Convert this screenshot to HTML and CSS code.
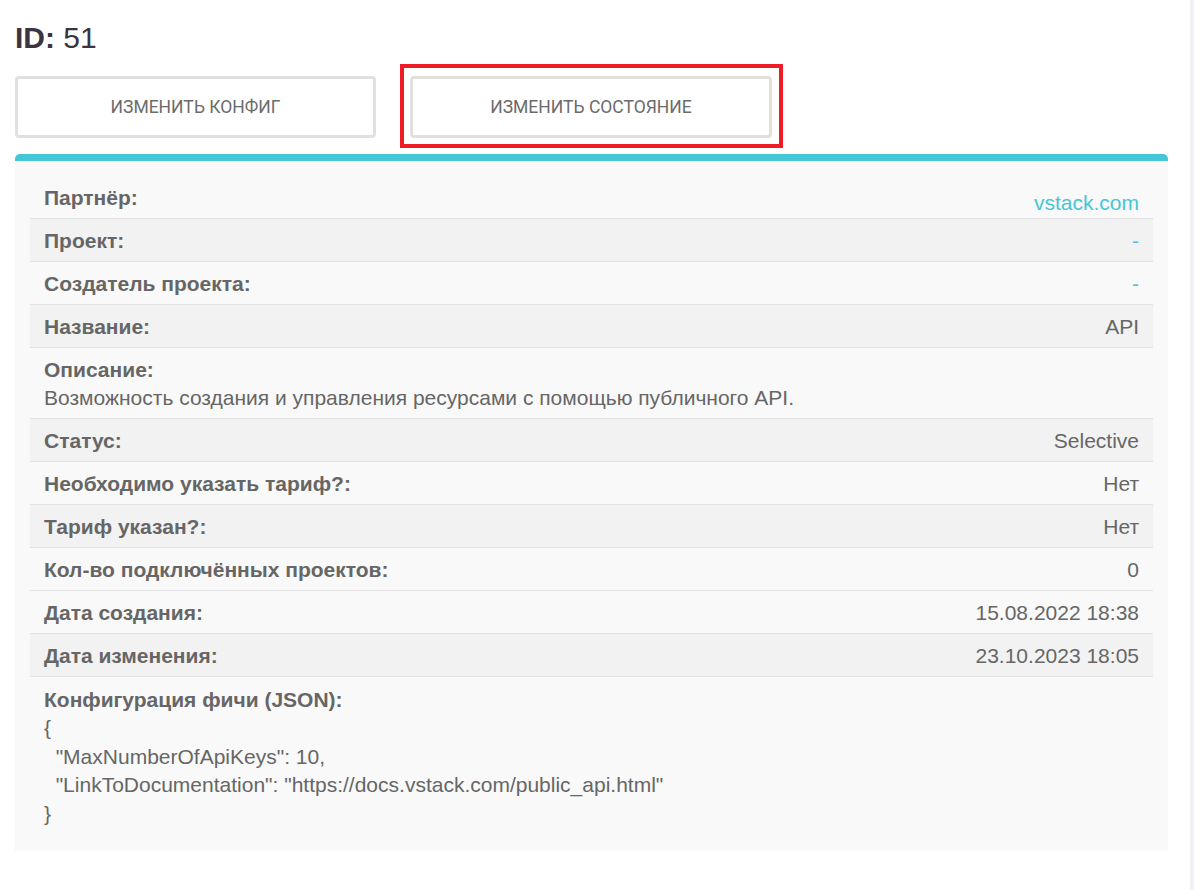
FILE: index.html
```html
<!DOCTYPE html>
<html lang="ru">
<head>
<meta charset="utf-8">
<title>ID: 51</title>
<link rel="stylesheet" href="styles.css">
</head>
<body>
<div class="page">
  <h1 class="title"><b>ID:</b> 51</h1>
  <div class="actions">
    <button class="btn">Изменить конфиг</button>
    <button class="btn btn-marked">Изменить состояние</button>
  </div>
  <div class="card">
    <div class="row first">
      <span class="label">Партнёр:</span>
      <a class="value link low">vstack.com</a>
    </div>
    <div class="row alt">
      <span class="label">Проект:</span>
      <a class="value link">-</a>
    </div>
    <div class="row">
      <span class="label">Создатель проекта:</span>
      <a class="value link">-</a>
    </div>
    <div class="row alt">
      <span class="label">Название:</span>
      <span class="value">API</span>
    </div>
    <div class="row block">
      <div class="label">Описание:</div>
      <div class="text">Возможность создания и управления ресурсами с помощью публичного API.</div>
    </div>
    <div class="row alt">
      <span class="label">Статус:</span>
      <span class="value">Selective</span>
    </div>
    <div class="row">
      <span class="label">Необходимо указать тариф?:</span>
      <span class="value">Нет</span>
    </div>
    <div class="row alt">
      <span class="label">Тариф указан?:</span>
      <span class="value">Нет</span>
    </div>
    <div class="row">
      <span class="label">Кол-во подключённых проектов:</span>
      <span class="value">0</span>
    </div>
    <div class="row">
      <span class="label">Дата создания:</span>
      <span class="value">15.08.2022 18:38</span>
    </div>
    <div class="row alt">
      <span class="label">Дата изменения:</span>
      <span class="value">23.10.2023 18:05</span>
    </div>
    <div class="row block json">
      <div class="label">Конфигурация фичи (JSON):</div>
<pre class="code">{
  "MaxNumberOfApiKeys": 10,
  "LinkToDocumentation": "https://docs.vstack.com/public_api.html"
}</pre>
    </div>
  </div>
</div>
</body>
</html>
```
FILE: styles.css
```css
html {
  background: #eff2f7;
}
body {
  margin: 0;
  width: 1190px;
  min-height: 890px;
  background: #ffffff;
  font-family: "Liberation Sans", Arial, sans-serif;
  color: #666666;
}
.page {
  padding: 21px 22px 0 15px;
}
.title {
  margin: 0;
  font-size: 30px;
  line-height: 34px;
  font-weight: normal;
  color: #3d3441;
}
.title b {
  font-weight: bold;
}
.actions {
  display: flex;
  gap: 34px;
  margin-top: 21px;
}
.btn {
  position: relative;
  width: 362px;
  height: 62px;
  background: #ffffff;
  border: 3px solid #e0e0e0;
  border-radius: 4px;
  font-family: Roboto, "Liberation Sans", sans-serif;
  font-size: 17.5px;
  text-transform: uppercase;
  color: #6b6b6b;
  padding: 0;
}
.btn:first-child {
  width: 361px;
}
.btn-marked::after {
  content: "";
  position: absolute;
  left: -13px;
  right: -14px;
  top: -15px;
  bottom: -13px;
  border: 4px solid #ee1c24;
  pointer-events: none;
}
.card {
  margin-top: 16px;
  background: #f9f9f9;
  border-top: 7px solid #45c6d6;
  border-radius: 5px 5px 0 0;
  padding: 14px 15px 15px;
}
.row {
  display: flex;
  justify-content: space-between;
  align-items: center;
  height: 40px;
  padding: 2px 14px 0;
  border-top: 1px solid #e2e2e2;
  font-size: 21px;
}
.row.first {
  border-top: none;
  height: 41px;
}
.row.alt {
  background: #f2f2f2;
}
.label {
  font-weight: bold;
}
.value {
  color: #666666;
}
.link {
  color: #45c6d6;
  text-decoration: none;
}
.low {
  margin-top: 10px;
}
.row.block {
  display: block;
  height: auto;
  padding: 8px 14px 6px;
  line-height: 28px;
}
.row.json {
  padding-top: 9px;
  padding-bottom: 8px;
}
.code {
  margin: 0;
  font-family: "Liberation Sans", Arial, sans-serif;
  font-size: 21px;
  line-height: 28.5px;
  white-space: pre;
}
```
